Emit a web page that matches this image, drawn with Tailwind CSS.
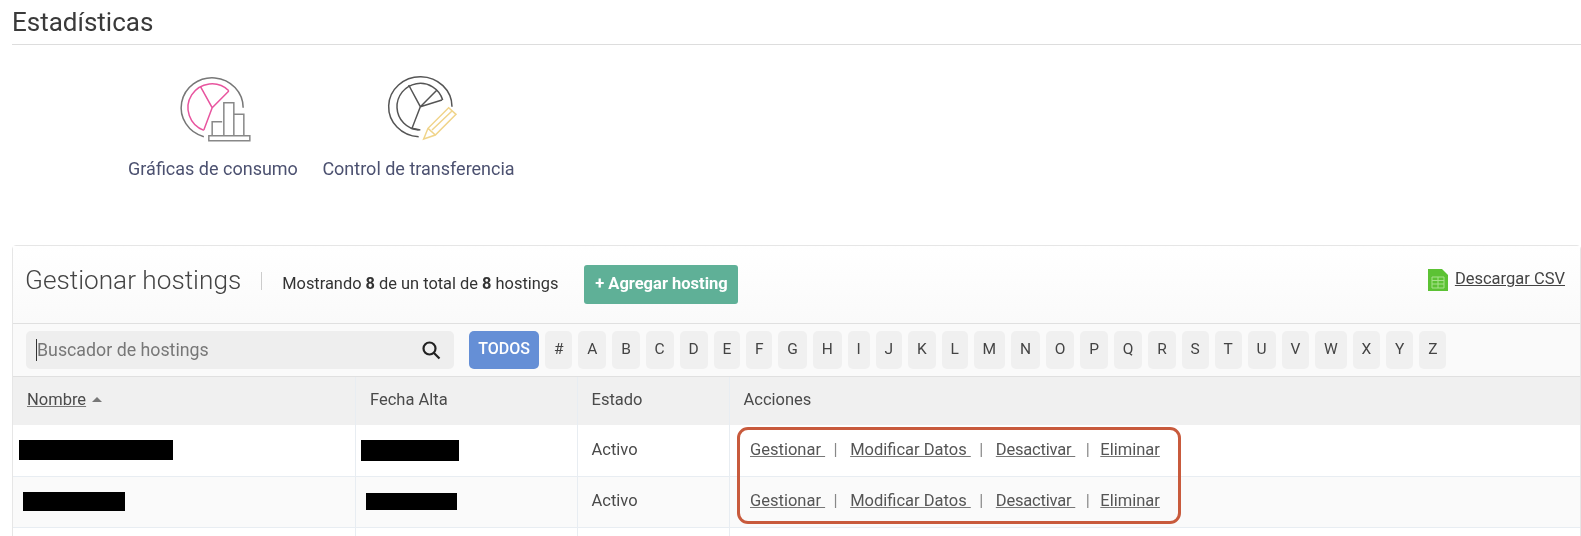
<!DOCTYPE html>
<html lang="es">

<head>
    <meta charset="UTF-8">
    <title>Estadísticas</title>
    <script src="https://cdn.jsdelivr.net/npm/@tailwindcss/browser@4"></script>
</head>

<body class="bg-white font-['Roboto',sans-serif] text-[#444] overflow-hidden">
    <div class="relative h-[536px] overflow-hidden pl-[12px] blur-[0.4px]">
        <h1 class="h-[45px] pt-[4px] text-[26px] leading-[36px] text-[#3a3a3a] border-b border-[#ddd]">Estadísticas</h1>

        <!-- accesos -->
        <div class="flex pl-[116px] pt-[20px] h-[200px] text-[#4c5170] text-[18px] leading-[24px]">
            <a class="flex flex-col items-center w-[170px]">
                <svg width="110" height="85" viewBox="-7.5 0 330 255" fill="none" stroke-width="4.500">
                    <path d="M130 215A93 90 0 1 1 248 128" stroke="#777" />
                    <path d="M130 196A72 72 0 1 1 205 77" stroke="#e8559f" />
                    <path d="M120 65L155 128L205 78M155 128L130 195" stroke="#e8559f" />
                    <path d="M155 212V170H185M190 212V113H220V212M222 148H250V212M145 212H268V227H145Z" stroke="#888" />
                </svg>
                <span class="mt-[7px] whitespace-nowrap">Gráficas de consumo</span>
            </a>
            <a class="flex flex-col items-center w-[190px] ml-[25.500px]">
                <svg width="110" height="85" viewBox="-24 0 330 255" fill="none" stroke-width="4.500">
                    <path d="M140 215A95 90 0 1 1 240 125" stroke="#555" />
                    <path d="M140 195A70 70 0 1 1 212 105" stroke="#555" />
                    <path d="M110 60L145 125L195 75M145 125L210 105M145 125L120 190L145 195" stroke="#555" />
                    <path d="M155 222L168 190L230 128L252 148L190 210ZM168 190L190 210M180 195L240 138" stroke="#f0d48a" />
                </svg>
                <span class="mt-[7px] whitespace-nowrap">Control de transferencia</span>
            </a>
        </div>

        <!-- tarjeta -->
        <div class="border border-[#e6e6e6] rounded-t-[4px]">
            <div class="h-[78px] flex items-center pl-[12px] pr-[15px] bg-gradient-to-b from-white to-[#fafafa] border-b border-[#e0e0e0]">
                <h2 class="text-[26.200px] font-light -mt-[8px] text-[#444] whitespace-nowrap">Gestionar hostings</h2>
                <span class="w-px h-[18px] bg-[#ccc] -mt-[8px] ml-[20px] mr-[20px]"></span>
                <span class="text-[16.400px] text-[#333] whitespace-nowrap">Mostrando <b>8</b> de un total de <b>8</b> hostings</span>
                <button class="ml-[26px] w-[154px] h-[39px] rounded-[3px] bg-[#5fb097] text-white text-[16.500px] font-bold">+ Agregar hosting</button>
                <a class="ml-auto flex items-center gap-[6px] -mt-[10px] text-[16.500px] underline whitespace-nowrap text-[#444]">
                    <svg width="22" height="24" viewBox="0 0 22 24">
                        <path d="M1 1H15L21 7V23H1Z" fill="#5cc234" />
                        <path d="M5 9H17V20H5ZM5 12.500H17M5 16H17M11 9V20" fill="none" stroke="#a8e28c" stroke-width="1" />
                    </svg>
                    Descargar CSV
                </a>
            </div>

            <div class="h-[53px] flex items-center pl-[13px] bg-[#fafafa] border-b border-[#e0e0e0]">
                <div class="w-[428px] h-[38px] rounded-[5px] bg-[#eee] flex items-center pl-[10px] pr-[13px] justify-between">
                    <span class="border-l border-[#333] text-[17.800px] text-[#777] leading-[22px]">Buscador de hostings</span>
                    <svg width="20" height="20" viewBox="0 0 20 20" fill="none" stroke="#222" stroke-width="2.200">
                        <circle cx="8.500" cy="8.500" r="6" />
                        <path d="M13 13L18.500 18.500" />
                    </svg>
                </div>
                <div class="flex items-center gap-[6px] ml-[15px] text-[15.500px] text-[#444]">
                    <a class="h-[38px] w-[70px] flex items-center justify-center pb-[3px] rounded-[5px] bg-[#658fd6] text-white text-[16px] font-medium">TODOS</a>
                    <a class="h-[38px] px-[8.900px] flex items-center rounded-[5px] bg-[#f0f0f0]">#</a>
                    <a class="h-[38px] px-[8.900px] flex items-center rounded-[5px] bg-[#f0f0f0]">A</a>
                    <a class="h-[38px] px-[8.900px] flex items-center rounded-[5px] bg-[#f0f0f0]">B</a>
                    <a class="h-[38px] px-[8.900px] flex items-center rounded-[5px] bg-[#f0f0f0]">C</a>
                    <a class="h-[38px] px-[8.900px] flex items-center rounded-[5px] bg-[#f0f0f0]">D</a>
                    <a class="h-[38px] px-[8.900px] flex items-center rounded-[5px] bg-[#f0f0f0]">E</a>
                    <a class="h-[38px] px-[8.900px] flex items-center rounded-[5px] bg-[#f0f0f0]">F</a>
                    <a class="h-[38px] px-[8.900px] flex items-center rounded-[5px] bg-[#f0f0f0]">G</a>
                    <a class="h-[38px] px-[8.900px] flex items-center rounded-[5px] bg-[#f0f0f0]">H</a>
                    <a class="h-[38px] px-[8.900px] flex items-center rounded-[5px] bg-[#f0f0f0]">I</a>
                    <a class="h-[38px] px-[8.900px] flex items-center rounded-[5px] bg-[#f0f0f0]">J</a>
                    <a class="h-[38px] px-[8.900px] flex items-center rounded-[5px] bg-[#f0f0f0]">K</a>
                    <a class="h-[38px] px-[8.900px] flex items-center rounded-[5px] bg-[#f0f0f0]">L</a>
                    <a class="h-[38px] px-[8.900px] flex items-center rounded-[5px] bg-[#f0f0f0]">M</a>
                    <a class="h-[38px] px-[8.900px] flex items-center rounded-[5px] bg-[#f0f0f0]">N</a>
                    <a class="h-[38px] px-[8.900px] flex items-center rounded-[5px] bg-[#f0f0f0]">O</a>
                    <a class="h-[38px] px-[8.900px] flex items-center rounded-[5px] bg-[#f0f0f0]">P</a>
                    <a class="h-[38px] px-[8.900px] flex items-center rounded-[5px] bg-[#f0f0f0]">Q</a>
                    <a class="h-[38px] px-[8.900px] flex items-center rounded-[5px] bg-[#f0f0f0]">R</a>
                    <a class="h-[38px] px-[8.900px] flex items-center rounded-[5px] bg-[#f0f0f0]">S</a>
                    <a class="h-[38px] px-[8.900px] flex items-center rounded-[5px] bg-[#f0f0f0]">T</a>
                    <a class="h-[38px] px-[8.900px] flex items-center rounded-[5px] bg-[#f0f0f0]">U</a>
                    <a class="h-[38px] px-[8.900px] flex items-center rounded-[5px] bg-[#f0f0f0]">V</a>
                    <a class="h-[38px] px-[8.900px] flex items-center rounded-[5px] bg-[#f0f0f0]">W</a>
                    <a class="h-[38px] px-[8.900px] flex items-center rounded-[5px] bg-[#f0f0f0]">X</a>
                    <a class="h-[38px] px-[8.900px] flex items-center rounded-[5px] bg-[#f0f0f0]">Y</a>
                    <a class="h-[38px] px-[8.900px] flex items-center rounded-[5px] bg-[#f0f0f0]">Z</a>
                </div>
            </div>

            <table class="w-full table-fixed border-collapse text-[16.500px] text-[#4a4a4a]">
                <colgroup>
                    <col class="w-[342.500px]">
                    <col class="w-[221.500px]">
                    <col class="w-[152px]">
                    <col>
                </colgroup>
                <thead>
                    <tr class="h-[48px] bg-[#f0f0f0] text-left">
                        <th class="font-normal pl-[14px] pb-[2px] border-r border-[#e8edf2]"><span class="underline decoration-[#777]">Nombre</span><span class="inline-block ml-[6px] mb-[3px] border-x-[5px] border-x-transparent border-b-[5px] border-b-[#777]"></span></th>
                        <th class="font-normal pl-[14px] pb-[2px] border-r border-[#e8edf2]">Fecha Alta</th>
                        <th class="font-normal pl-[14px] pb-[2px] border-r border-[#e8edf2]">Estado</th>
                        <th class="font-normal pl-[14px] pb-[2px]">Acciones</th>
                    </tr>
                </thead>
                <tbody>
                    <tr class="h-[51px] bg-white border-b border-[#e8edf2]">
                        <td class="border-r border-[#e8edf2]"><div class="w-[154px] h-[20px] ml-[6px] bg-black"></div></td>
                        <td class="border-r border-[#e8edf2]"><div class="w-[98px] h-[21px] ml-[5px] bg-black"></div></td>
                        <td class="pl-[14px] border-r border-[#e8edf2]">Activo</td>
                        <td class="pl-[20.500px]">
                            <div class="flex items-center whitespace-pre text-[#555]">
                                <a class="underline decoration-[#777]">Gestionar </a><span class="ml-[8.500px] mr-[12.500px] text-[#888]">|</span><a class="underline decoration-[#777]">Modificar Datos </a><span class="ml-[8.500px] mr-[12.500px] text-[#888]">|</span><a class="underline decoration-[#777] tracking-[-0.2px]">Desactivar </a><span class="mx-[10.500px] text-[#888]">|</span><a class="underline decoration-[#777]">Eliminar</a>
                            </div>
                        </td>
                    </tr>
                    <tr class="h-[51px] bg-[#fafafa] border-b border-[#e8edf2]">
                        <td class="border-r border-[#e8edf2]"><div class="w-[102px] h-[19px] ml-[10px] bg-black"></div></td>
                        <td class="border-r border-[#e8edf2]"><div class="w-[91px] h-[17px] ml-[10px] bg-black"></div></td>
                        <td class="pl-[14px] border-r border-[#e8edf2]">Activo</td>
                        <td class="pl-[20.500px]">
                            <div class="flex items-center whitespace-pre text-[#555]">
                                <a class="underline decoration-[#777]">Gestionar </a><span class="ml-[8.500px] mr-[12.500px] text-[#888]">|</span><a class="underline decoration-[#777]">Modificar Datos </a><span class="ml-[8.500px] mr-[12.500px] text-[#888]">|</span><a class="underline decoration-[#777] tracking-[-0.2px]">Desactivar </a><span class="mx-[10.500px] text-[#888]">|</span><a class="underline decoration-[#777]">Eliminar</a>
                            </div>
                        </td>
                    </tr>
                    <tr class="h-[51px] bg-white">
                        <td class="border-r border-[#e8edf2]"></td>
                        <td class="border-r border-[#e8edf2]"></td>
                        <td class="border-r border-[#e8edf2]"></td>
                        <td></td>
                    </tr>
                </tbody>
            </table>
        </div>

        <!-- recuadro de resaltado -->
        <div class="absolute left-[737px] top-[427px] w-[444px] h-[97px] border-[3px] border-[#c85a3c] rounded-[11px]"></div>
    </div>
</body>

</html>
